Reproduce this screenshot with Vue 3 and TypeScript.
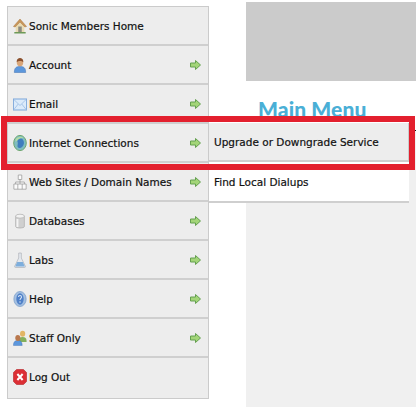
<script setup lang="ts">
interface Item { id: string; label: string; arrow: boolean }
const items: Item[] = [
  { id: 'home', label: 'Sonic Members Home', arrow: false },
  { id: 'account', label: 'Account', arrow: true },
  { id: 'email', label: 'Email', arrow: true },
  { id: 'net', label: 'Internet Connections', arrow: true },
  { id: 'web', label: 'Web Sites / Domain Names', arrow: true },
  { id: 'db', label: 'Databases', arrow: true },
  { id: 'labs', label: 'Labs', arrow: true },
  { id: 'help', label: 'Help', arrow: true },
  { id: 'staff', label: 'Staff Only', arrow: true },
  { id: 'logout', label: 'Log Out', arrow: false },
]
</script>

<template>
  <div class="page">
    <nav class="side">
      <a v-for="it in items" :key="it.id" class="row">
        <svg class="icon" viewBox="0 0 16 16" width="14" height="16" preserveAspectRatio="none">
          <template v-if="it.id === 'home'">
            <path d="M3 8 L8 3.800 L13 8 V14.500 H3 Z" fill="#eadcb4" />
            <path d="M0.500 8.500 L8 1 L15.500 8.500 L13.500 9 L8 4 L2.500 9 Z" fill="#c9965a" stroke="#a8743a" stroke-width=".5" />
            <rect x="6" y="8.500" width="4" height="6" fill="#8b8a80" />
            <rect x="1.500" y="14" width="13" height="1.500" fill="#6d9a58" />
          </template>
          <template v-else-if="it.id === 'account'">
            <path d="M1.500 15.500 C1.500 10.500 4 9.500 8 9.500 C12 9.500 14.500 10.500 14.500 15.500 Z" fill="#5c97dc" stroke="#3a6cae" stroke-width=".5" />
            <circle cx="8" cy="5.500" r="3.700" fill="#d9a679" />
            <path d="M4.200 5 C4.200 2 6 1 8 1 C10 1 11.800 2 11.800 5 C10 3.500 6 3.500 4.200 5 Z" fill="#8a4f2c" />
          </template>
          <template v-else-if="it.id === 'email'">
            <rect x="0.500" y="3" width="15" height="11" fill="#dcebfa" stroke="#7ba6da" />
            <path d="M1 3.500 L8 9.500 L15 3.500 M1 13.500 L6 8 M15 13.500 L10 8" fill="none" stroke="#a4c2e6" />
          </template>
          <template v-else-if="it.id === 'net'">
            <ellipse cx="8" cy="8" rx="7.200" ry="7.600" fill="#7fbcc0" stroke="#6aa36a" />
            <path d="M6 3 C10 2.500 13 5 12.500 8.500 C12 12 8 14 6 12.500 C4 11 6.500 8.500 5 6.500 Z" fill="#3f7dbe" />
            <path d="M3 4 C6 1.200 10 1.200 12 2.800 C9 3 6 4 3 7 Z" fill="#b4dca4" />
          </template>
          <template v-else-if="it.id === 'web'">
            <path d="M6 1 H10 V5.500 H6 Z M8 5.500 V8 M3 10 V8 H13 V10 M8 8 V10" fill="#fbfbfb" stroke="#9a9a9a" stroke-width=".8" />
            <path d="M1 10 H15 V15.200 H1 Z M5.500 10 V15.200 M10.500 10 V15.200" fill="#fbfbfb" stroke="#9a9a9a" stroke-width=".8" />
          </template>
          <template v-else-if="it.id === 'db'">
            <path d="M3 3 V13.500 C3 15.500 13 15.500 13 13.500 V3 Z" fill="#cfcfcf" stroke="#a8a8a8" stroke-width=".7" />
            <ellipse cx="8" cy="3.200" rx="5" ry="2" fill="#f2f2f2" stroke="#a8a8a8" stroke-width=".7" />
            <rect x="4" y="6" width="2.200" height="8" fill="#f4f4f4" />
          </template>
          <template v-else-if="it.id === 'labs'">
            <path d="M6.500 1 H9.500 V6 L14 14 C14.500 15 14 15.500 13 15.500 H3 C2 15.500 1.500 15 2 14 L6.500 6 Z" fill="#e4e8ee" stroke="#a0a4ac" stroke-width=".6" />
            <path d="M4.800 10 H11.200 L13.500 14.500 H2.500 Z" fill="#7eaedc" />
          </template>
          <template v-else-if="it.id === 'help'">
            <ellipse cx="8" cy="8" rx="7" ry="7.500" fill="#a4c0e2" stroke="#7a9cc8" stroke-width=".8" />
            <ellipse cx="8" cy="8" rx="4.200" ry="5.800" fill="#4f80c8" />
            <path d="M6.300 6 C6.300 4 9.700 4 9.700 6 C9.700 7.500 8 7.300 8 9 M8 10.300 V11.700" fill="none" stroke="#dbe7f6" stroke-width="1.200" />
          </template>
          <template v-else-if="it.id === 'staff'">
            <path d="M6 11 C6 8 8 7 11 7 C14 7 15.500 8 15.500 11 L15.500 12 H8 Z" fill="#84b05c" />
            <circle cx="11" cy="3.800" r="3" fill="#e2b565" />
            <path d="M0.500 15.500 C0.500 11.500 2.500 10.500 5.500 10.500 C8.500 10.500 10.500 11.500 10.500 15.500 Z" fill="#5c97dc" stroke="#3a6cae" stroke-width=".4" />
            <circle cx="5.500" cy="8" r="2.900" fill="#b9784e" />
          </template>
          <template v-else>
            <path d="M4 0.500 H12 L15.500 3.500 V12.500 L12 15.500 H4 L0.500 12.500 V3.500 Z" fill="#dc2f35" stroke="#b01c22" stroke-width=".6" />
            <path d="M5 5 L11 11 M11 5 L5 11" stroke="#fff" stroke-width="2.400" fill="none" />
          </template>
        </svg>
        <span class="label">{{ it.label }}</span>
        <svg v-if="it.arrow" class="arrow" viewBox="0 0 11 10" width="11" height="10">
          <path d="M0.500 3 H5.500 V0.500 L10.500 5 L5.500 9.500 V7 H0.500 Z" fill="#a3d578" stroke="#65a050" />
        </svg>
      </a>
    </nav>

    <main class="main">
      <div class="banner"></div>
      <h1 class="title">Main Menu</h1>
      <div class="panel"></div>
    </main>

    <div class="submenu">
      <a class="sub active">Upgrade or Downgrade Service</a>
      <a class="sub">Find Local Dialups</a>
    </div>
    <div class="highlight"></div>
  </div>
</template>

<style>
html, body { margin: 0; background: #fff; }
</style>

<style scoped>
.page {
  position: relative;
  display: flex;
  width: 416px;
  height: 407px;
  overflow: hidden;
  font-family: "DejaVu Sans", sans-serif;
  color: #111;
}
.side {
  flex: none;
  width: 200px;
  height: 391px;
  margin: 6px 0 0 7px;
  border: 1px solid #cbcbcb;
  background: #ededed;
  display: flex;
  flex-direction: column;
}
.row {
  flex: none;
  box-sizing: border-box;
  height: 39px;
  display: flex;
  align-items: center;
  padding: 0 7px 0 5px;
  border-bottom: 2px solid #cfcfcf;
  font-size: 10.5px;
  line-height: 16px;
  -webkit-text-stroke: 0.2px #111;
}
.row:last-child { border-bottom: 0; height: 38px; }
.icon { flex: none; margin-right: 2px; }
.label { flex: 1; white-space: nowrap; }
.arrow { flex: none; }
.main {
  flex: 1;
  margin-left: 37px;
  display: flex;
  flex-direction: column;
  min-width: 0;
}
.banner {
  flex: none;
  height: 79px;
  margin-top: 2px;
  background: #cbcbcb;
}
.title {
  flex: none;
  height: 49px;
  margin: 0;
  padding: 16px 0 0 12px;
  box-sizing: border-box;
  font-family: Lato, sans-serif;
  font-size: 21px;
  font-weight: 900;
  line-height: 24px;
  letter-spacing: 0.1px;
  color: #4aafd6;
}
.panel {
  flex: 1;
  background: #f0f0f0;
  border-top: 1px solid #111;
}
.submenu {
  position: absolute;
  left: 208px;
  top: 123px;
  width: 200px;
  background: #fff;
  border-left: 1px solid #cbcbcb;
}
.sub {
  display: flex;
  align-items: center;
  box-sizing: border-box;
  height: 39px;
  padding: 1px 0 0 5px;
  border-bottom: 2px solid #cfcfcf;
  font-size: 10.5px;
  white-space: nowrap;
  -webkit-text-stroke: 0.2px #111;
}
.sub + .sub { height: 41px; padding-top: 0; }
.active {
  background: #ededed;
  border-right: 1px solid #cbcbcb;
}
.highlight {
  position: absolute;
  left: 1px;
  top: 116px;
  width: 402px;
  height: 42px;
  border: 6px solid #e3202e;
  pointer-events: none;
}
</style>
